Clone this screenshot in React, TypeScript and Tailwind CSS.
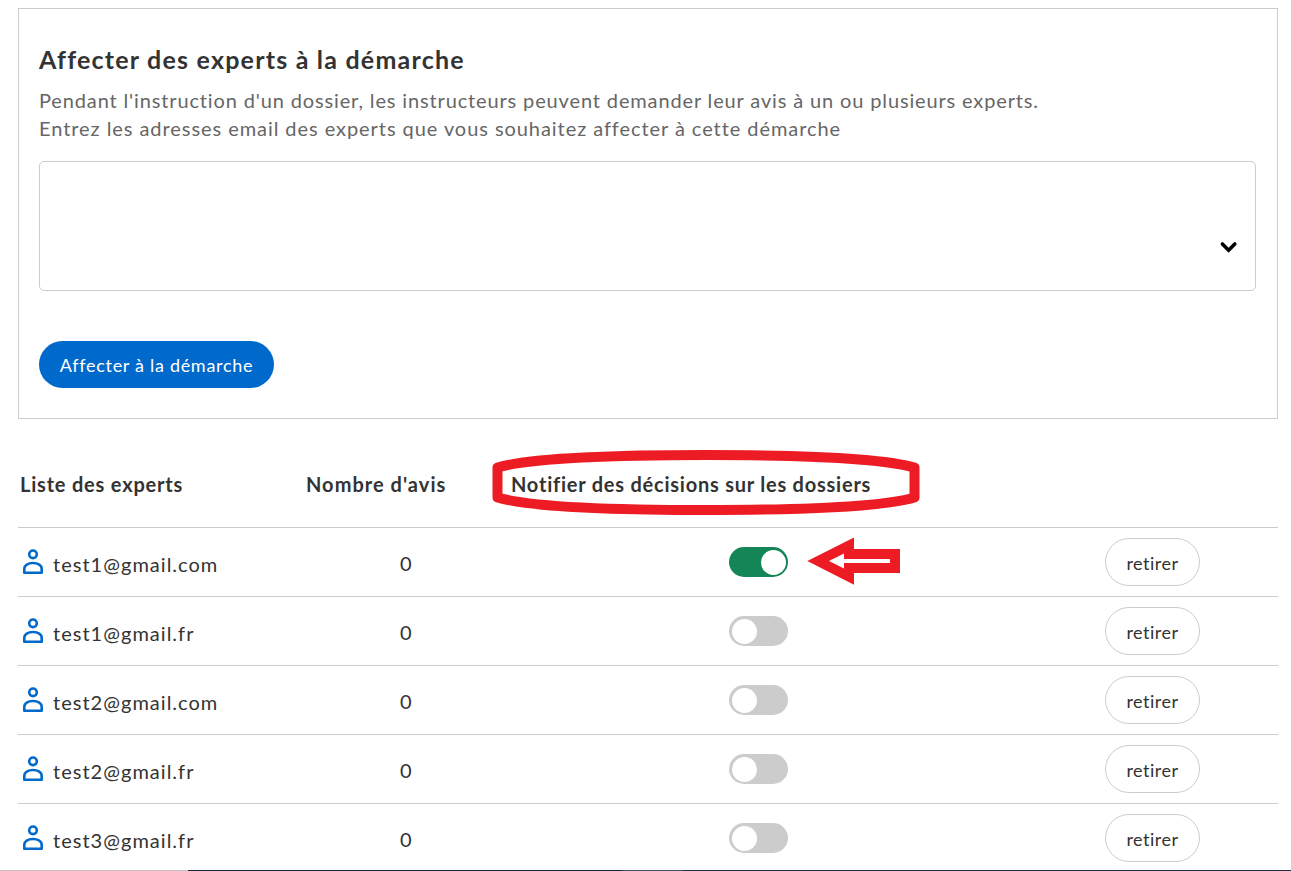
import React from 'react';

type Expert = { email: string; avis: number; notify: boolean };

const experts: Expert[] = [
  { email: 'test1@gmail.com', avis: 0, notify: true },
  { email: 'test1@gmail.fr', avis: 0, notify: false },
  { email: 'test2@gmail.com', avis: 0, notify: false },
  { email: 'test2@gmail.fr', avis: 0, notify: false },
  { email: 'test3@gmail.fr', avis: 0, notify: false },
];

function PersonIcon() {
  return (
    <svg className="block shrink-0" width="22" height="26" viewBox="0 0 22 26" fill="none" stroke="#0069cc" strokeWidth="2.6" strokeLinejoin="round">
      <circle cx="11" cy="5.3" r="3.8" />
      <path d="M2.3 23.7v-4c0-3.3 3.6-5.7 8.7-5.7s8.7 2.4 8.7 5.7v4z" />
    </svg>
  );
}

function Toggle({ on }: { on: boolean }) {
  return (
    <span
      role="switch"
      aria-checked={on}
      className={
        on
          ? 'flex h-[30px] w-[59px] items-center justify-end rounded-full bg-[#148556] pt-px pr-0.5'
          : 'flex h-[30px] w-[59px] items-center justify-start rounded-full bg-[#cccccc] pt-px pl-[3px]'
      }
    >
      <span className="size-[25px] rounded-full bg-white" />
    </span>
  );
}

function Arrow() {
  return (
    <svg className="absolute top-[9px] left-[789px]" width="94" height="49" viewBox="807 537 94 49">
      <path
        fill="#ed1c24"
        fillRule="evenodd"
        d="M807.3 561 854 537.5V549h46v24h-46v11.7zM829 561l15 7.6V563h46v-4h-46v-5.6z"
      />
    </svg>
  );
}

function Ring() {
  return (
    <svg className="absolute top-0 left-[473px]" width="430" height="68" viewBox="491 449 430 68" fill="none">
      <path
        stroke="#ed1c24"
        strokeWidth="10"
        strokeLinejoin="round"
        d="M497.5 467.5C530 458 620 455 706 455S882 458 914.5 467.5V497.5C882 507 792 510 706 510S530 507 497.5 497.5Z"
      />
    </svg>
  );
}

export default function App() {
  return (
    <div className="flex h-[871px] w-[1291px] flex-col overflow-hidden bg-white font-['Lato','Open_Sans',sans-serif] text-[20px] text-[#333333]">
      <div className="h-[870px] overflow-hidden pt-2 pr-[13px] pl-[18px]">
        <section className="h-[411px] border border-[#cccccc] px-5 pt-[34px]">
          <h1 className="h-8 text-[25px] leading-8 font-bold tracking-[1.21px] whitespace-nowrap">Affecter des experts à la démarche</h1>
          <p className="mt-[11px] h-14 leading-7 text-[#666666]">
            <span className="block tracking-[0.86px] whitespace-nowrap">
              Pendant l'instruction d'un dossier, les instructeurs peuvent demander leur avis à un ou plusieurs experts.
            </span>
            <span className="block tracking-[0.94px] whitespace-nowrap">
              Entrez les adresses email des experts que vous souhaitez affecter à cette démarche
            </span>
          </p>
          <div className="mt-[19px] flex h-[130px] w-[1217px] items-end justify-end rounded-[5px] border border-[#cccccc] pr-[17px] pb-[36px]">
            <svg width="19" height="14" viewBox="0 0 19 14" fill="none" stroke="#000" strokeWidth="3.6" strokeLinecap="round">
              <path d="M3.4 4l6.2 6.2L15.8 4" />
            </svg>
          </div>
          <button className="mt-[50px] flex h-[47px] w-[235px] items-center justify-center rounded-full bg-[#0069cc] pt-0.5 text-[18px] tracking-[0.7px] whitespace-nowrap text-white">
            Affecter à la démarche
          </button>
        </section>

        <div className="mt-[30px]">
          <div className="relative grid h-[78px] grid-cols-[288px_205px_1fr] pt-[21px] leading-7 font-bold whitespace-nowrap">
            <span className="pl-[2px] tracking-[0.8px]">Liste des experts</span>
            <span className="tracking-[1.02px]">Nombre d'avis</span>
            <span className="tracking-[0.77px]">Notifier des décisions sur les dossiers</span>
            <Ring />
          </div>
          {experts.map((e, i) => (
            <div
              key={e.email}
              className="relative grid h-[69px] grid-cols-[382px_329px_376px_1fr] items-center border-t border-[#cccccc]"
            >
              <div className="flex items-center gap-[9px] pl-1">
                <PersonIcon />
                <span className="pt-[3px] tracking-[1.02px]">{e.email}</span>
              </div>
              <span className="pt-0.5">{e.avis}</span>
              <Toggle on={e.notify} />
              <button className="flex h-12 w-[95px] items-center justify-center rounded-full border border-[#cccccc] pt-[3px] text-[18px] tracking-[0.5px]">
                retirer
              </button>
              {i === 0 && <Arrow />}
            </div>
          ))}
        </div>
      </div>
      <div className="flex h-px">
        <div className="w-[188px] bg-[#bfbfbf]" />
        <div className="w-[434px] bg-[#16213e]" />
        <div className="w-[61px] bg-[#3f4c66]" />
        <div className="flex-1 bg-[#1c2b46]" />
      </div>
    </div>
  );
}
